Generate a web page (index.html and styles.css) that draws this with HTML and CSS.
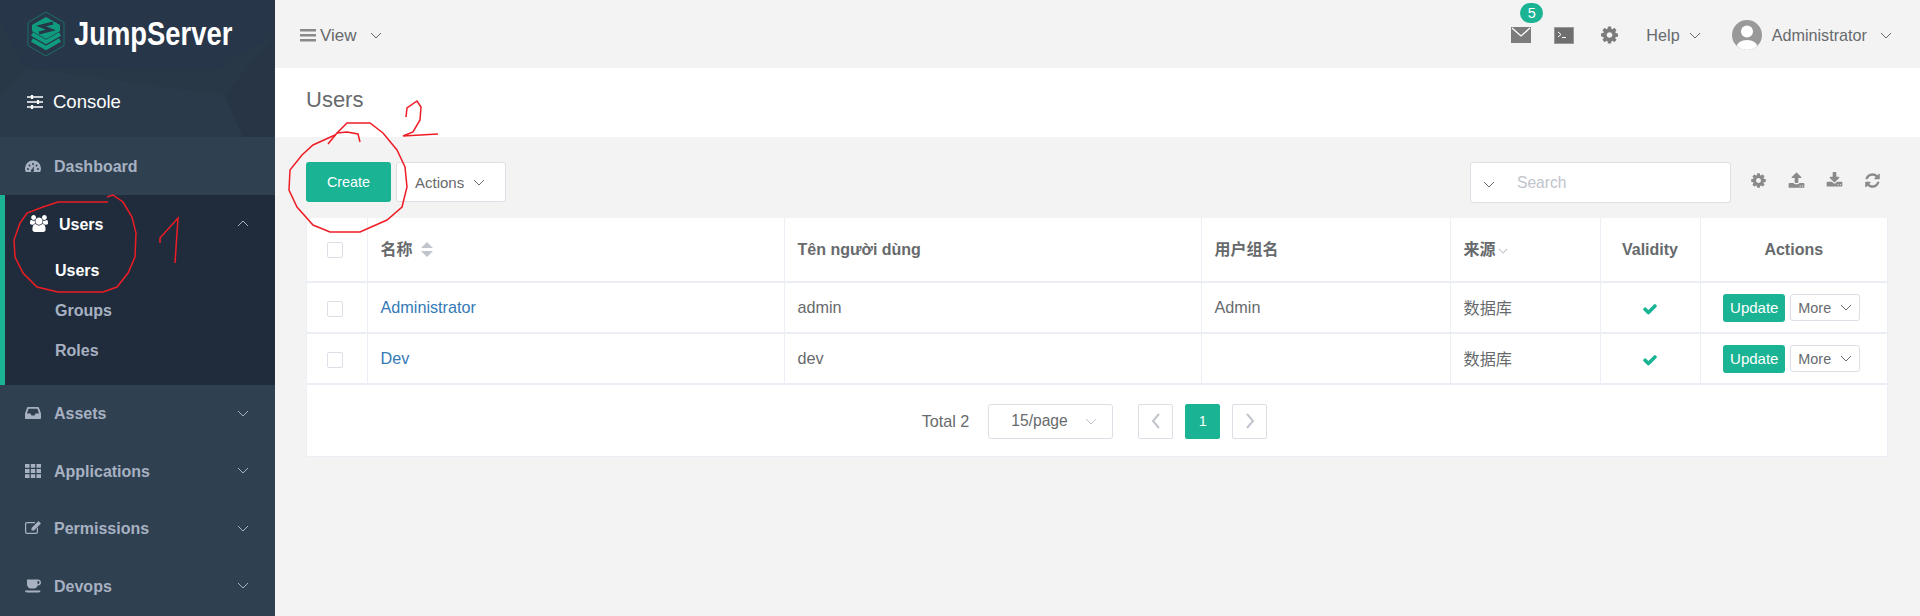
FILE: index.html
```html
<!DOCTYPE html>
<html>
<head>
<meta name="viewport" content="width=device-width, initial-scale=1">
<title>Users</title>
<link rel="stylesheet" href="styles.css">
</head>
<body>

<div class="app">
  <!-- left menu -->
  <aside class="sidebar">
    <div class="side-head">
      <svg class="side-bg" width="275" height="137" viewBox="0 0 275 137">
        <polygon points="0,0 275,0 275,35 215,70 25,68 0,20" fill="#28364a"/>
        <polygon points="0,98 25,68 225,95 243,137 0,137" fill="#2b3a4a"/>
        <polygon points="225,95 275,35 275,137 243,137" fill="#273545"/>
      </svg>
      <div class="logo">
        <svg width="38" height="46" viewBox="0 0 38 46">
          <polygon points="19,1 37,11.500 37,34.500 19,45 1,34.500 1,11.500" fill="none" stroke="#1a6f68" stroke-width="1"/>
          <polygon points="19,6 33,14 33,20 19,28 5,20 5,14" fill="#0f9b7d"/>
          <path d="M26 12 L14 15 L24 19 L12 22" fill="none" stroke="#26374a" stroke-width="3"/>
          <path d="M5 23 L19 31 L33 23" fill="none" stroke="#0f9b7d" stroke-width="4"/>
          <path d="M5 29 L19 37 L33 29" fill="none" stroke="#0f9b7d" stroke-width="4"/>
        </svg>
        <span class="logo-text">JumpServer</span>
      </div>
      <div class="console">
        <svg width="16" height="16" viewBox="0 0 16 16" fill="none" stroke="#fff" stroke-width="1.300">
          <path d="M0 3h16M0 8h16M0 13h16"/>
          <path d="M5 1v4M11 6v4M5 11v4" stroke-width="2.200"/>
        </svg>
        <span>Console</span>
      </div>
    </div>

    <div class="menu-item">
      <svg class="menu-icon" viewBox="0 0 16 16"><path fill-rule="evenodd" d="M8 2.500a8 8 0 0 1 8 8c0 1.300-.3 2.500-.8 3.500H.8A8 8 0 0 1 0 10.500a8 8 0 0 1 8-8zM3 10a1 1 0 1 0 0 2 1 1 0 0 0 0-2zm1.500-3.500a1 1 0 1 0 0 2 1 1 0 0 0 0-2zM8 5a1 1 0 1 0 0 2 1 1 0 0 0 0-2zm3.500 1.500a1 1 0 1 0 0 2 1 1 0 0 0 0-2zM13 10a1 1 0 1 0 0 2 1 1 0 0 0 0-2zM8.800 8 7 11.200a1.500 1.500 0 1 0 1.700.8z"/></svg>
      <span>Dashboard</span>
    </div>

    <div class="menu-group">
      <div class="menu-item active">
        <svg class="menu-icon users-icon" viewBox="0 0 1920 1792"><path d="M593 896q-162 5-265 128h-134q-82 0-138-40.500t-56-118.500q0-353 124-353 6 0 43.500 21t97.500 42.500 119 21.500q67 0 133-23-5 37-5 66 0 139 81 256zm1071 637q0 120-73 189.500t-194 69.500h-874q-121 0-194-69.500t-73-189.500q0-53 3.500-103.500t14-109 26.500-108.500 43-97.500 62-81 85.500-53.500 111.500-20q10 0 43 21.500t73 48 107 48 135 21.500 135-21.500 107-48 73-48 43-21.500q61 0 111.500 20t85.500 53.500 62 81 43 97.500 26.500 108.500 14 109 3.500 103.500zm-1024-1277q0 106-75 181t-181 75-181-75-75-181 75-181 181-75 181 75 75 181zm704 384q0 159-112.500 271.500t-271.500 112.500-271.500-112.500-112.500-271.500 112.500-271.500 271.500-112.500 271.500 112.500 112.500 271.500zm576 225q0 78-56 118.500t-138 40.500h-134q-103-123-265-128 81-117 81-256 0-29-5-66 66 23 133 23 59 0 119-21.500t97.500-42.500 43.500-21q124 0 124 353zm-128-609q0 106-75 181t-181 75-181-75-75-181 75-181 181-75 181 75 75 181z"/></svg>
        <span>Users</span>
        <svg class="chev up" viewBox="0 0 12 7"><path d="M1 6l5-5 5 5"/></svg>
      </div>
      <a class="sub-item current">Users</a>
      <a class="sub-item">Groups</a>
      <a class="sub-item">Roles</a>
    </div>

    <div class="menu-item">
      <svg class="menu-icon" viewBox="0 0 16 16"><path fill-rule="evenodd" d="M3 2h10c.4 0 .7.2.9.6L16 8.500V13c0 .6-.4 1-1 1H1c-.6 0-1-.4-1-1V8.500l2.100-5.900C2.300 2.200 2.600 2 3 2zm.6 1.800L2 8.500h3.500l1 2h3l1-2H14l-1.600-4.700z"/></svg>
      <span>Assets</span>
      <svg class="chev" viewBox="0 0 12 7"><path d="M1 1l5 5 5-5"/></svg>
    </div>
    <div class="menu-item">
      <svg class="menu-icon" viewBox="0 0 16 14"><path d="M0 0h4.500v3.800H0zM5.800 0h4.400v3.800H5.800zM11.500 0H16v3.800h-4.500zM0 5.100h4.500v3.800H0zM5.800 5.100h4.400v3.800H5.800zM11.500 5.100H16v3.800h-4.500zM0 10.200h4.500V14H0zM5.800 10.200h4.400V14H5.800zM11.500 10.200H16V14h-4.500z"/></svg>
      <span>Applications</span>
      <svg class="chev" viewBox="0 0 12 7"><path d="M1 1l5 5 5-5"/></svg>
    </div>
    <div class="menu-item">
      <svg class="menu-icon" viewBox="0 0 16 14"><path d="M2 1h8v1.200H2c-.5 0-.8.300-.8.800v8c0 .5.300.8.800.8h9c.5 0 .8-.3.800-.8V7.500L13 6.300V11c0 1.200-.9 2-2 2H2c-1.100 0-2-.8-2-2V3c0-1.200.9-2 2-2z"/><path d="M13.500 0 16 2.500 9 9.500H6.500V7z"/></svg>
      <span>Permissions</span>
      <svg class="chev" viewBox="0 0 12 7"><path d="M1 1l5 5 5-5"/></svg>
    </div>
    <div class="menu-item">
      <svg class="menu-icon" viewBox="0 0 16 15"><path fill-rule="evenodd" d="M2 1h11c1.700 0 3 1.100 3 3s-1.300 3-3 3h-.5c-.4 1.700-1.700 3-3.500 3H6c-2.200 0-4-1.800-4-4zm10.500 1.500V5.500H13c.9 0 1.500-.6 1.500-1.500s-.6-1.500-1.500-1.500z"/><path d="M0 12h15.500c0 1.200-.8 2-2 2H2c-1.200 0-2-.8-2-2z"/></svg>
      <span>Devops</span>
      <svg class="chev" viewBox="0 0 12 7"><path d="M1 1l5 5 5-5"/></svg>
    </div>
  </aside>

  <main class="main">
    <header class="topbar">
      <div class="view-menu">
        <svg width="16" height="13" viewBox="0 0 16 13" fill="#8a8a8a"><path d="M0 0h16v2.600H0zM0 5h16v2.600H0zM0 10h16v2.600H0z"/></svg>
        <span>View</span>
        <svg class="chev dark" viewBox="0 0 12 7"><path d="M1 1l5 5 5-5"/></svg>
      </div>
      <div class="top-right">
        <div class="mail">
          <svg width="20" height="16" viewBox="0 0 20 16"><rect width="20" height="16" fill="#7c7c7c"/><path d="M1 1l9 8 9-8" fill="none" stroke="#fff" stroke-width="1.300"/></svg>
          <span class="badge">5</span>
        </div>
        <svg class="term" width="20" height="17" viewBox="0 0 20 17"><rect x=".5" y=".5" width="19" height="16" fill="#6f6f6f" stroke="#999"/><path d="M4 5l3 2.500L4 10M8 10.500h4" fill="none" stroke="#fff" stroke-width="1"/></svg>
        <svg class="gear top-gear" viewBox="0 0 1536 1792"><path d="M1024 896q0-106-75-181t-181-75-181 75-75 181 75 181 181 75 181-75 75-181zm512-109v222q0 12-8 23t-20 13l-185 28q-19 54-39 91 35 50 107 138 10 12 10 25t-9 23q-27 37-99 108t-94 71q-12 0-26-9l-138-108q-44 23-91 38-16 136-29 186-7 28-36 28h-222q-14 0-24.500-8.500t-11.500-21.500l-28-184q-49-16-90-37l-141 107q-10 9-25 9-14 0-25-11-126-114-165-168-7-10-7-23 0-12 8-23 15-21 51-66.500t54-70.500q-27-50-41-99l-183-27q-13-2-21-12.500t-8-23.500v-222q0-12 8-23t19-13l186-28q14-46 39-92-40-57-107-138-10-12-10-24 0-10 9-23 26-36 98.500-107.500t94.500-71.500q13 0 26 10l138 107q44-23 91-38 16-136 29-186 7-28 36-28h222q14 0 24.500 8.500t11.500 21.500l28 184q49 16 90 37l142-107q9-9 24-9 13 0 25 10 129 119 165 170 7 8 7 22 0 12-8 23-15 21-51 66.500t-54 70.500q26 50 41 98l183 28q13 2 21 12.500t8 23.500z"/></svg>
        <div class="help">
          <span>Help</span>
          <svg class="chev dark" viewBox="0 0 12 7"><path d="M1 1l5 5 5-5"/></svg>
        </div>
        <div class="user-menu">
          <svg width="30" height="30" viewBox="0 0 30 30"><defs><clipPath id="av"><circle cx="15" cy="15" r="15"/></clipPath></defs><g clip-path="url(#av)"><rect width="30" height="30" fill="#999"/><circle cx="15" cy="11.500" r="6" fill="#fff"/><ellipse cx="15" cy="27" rx="10.500" ry="7" fill="#fff"/></g></svg>
          <span>Administrator</span>
          <svg class="chev dark" viewBox="0 0 12 7"><path d="M1 1l5 5 5-5"/></svg>
        </div>
      </div>
    </header>

    <div class="page-title">Users</div>

    <section class="content">
      <div class="toolbar">
        <button class="btn-create">Create</button>
        <button class="btn-actions">Actions
          <svg class="chev dark" viewBox="0 0 12 7"><path d="M1 1l5 5 5-5"/></svg>
        </button>
        <div class="spacer"></div>
        <div class="search">
          <svg class="chev dark" viewBox="0 0 12 7"><path d="M1 1l5 5 5-5"/></svg>
          <span>Search</span>
        </div>
        <div class="tools">
          <svg class="tool" viewBox="0 0 1536 1792"><path d="M1024 896q0-106-75-181t-181-75-181 75-75 181 75 181 181 75 181-75 75-181zm512-109v222q0 12-8 23t-20 13l-185 28q-19 54-39 91 35 50 107 138 10 12 10 25t-9 23q-27 37-99 108t-94 71q-12 0-26-9l-138-108q-44 23-91 38-16 136-29 186-7 28-36 28h-222q-14 0-24.500-8.500t-11.500-21.500l-28-184q-49-16-90-37l-141 107q-10 9-25 9-14 0-25-11-126-114-165-168-7-10-7-23 0-12 8-23 15-21 51-66.500t54-70.500q-27-50-41-99l-183-27q-13-2-21-12.500t-8-23.500v-222q0-12 8-23t19-13l186-28q14-46 39-92-40-57-107-138-10-12-10-24 0-10 9-23 26-36 98.500-107.500t94.500-71.500q13 0 26 10l138 107q44-23 91-38 16-136 29-186 7-28 36-28h222q14 0 24.500 8.500t11.500 21.500l28 184q49 16 90 37l142-107q9-9 24-9 13 0 25 10 129 119 165 170 7 8 7 22 0 12-8 23-15 21-51 66.500t-54 70.500q26 50 41 98l183 28q13 2 21 12.500t8 23.500z"/></svg>
          <svg class="tool" viewBox="0 0 1792 1792"><path d="M1344 1472q0-26-19-45t-45-19-45 19-19 45 19 45 45 19 45-19 19-45zm256 0q0-26-19-45t-45-19-45 19-19 45 19 45 45 19 45-19 19-45zm128-224v320q0 40-28 68t-68 28h-1472q-40 0-68-28t-28-68v-320q0-40 28-68t68-28h427q21 56 70.500 92t110.500 36h256q61 0 110.500-36t70.500-92h427q40 0 68 28t28 68zm-325-648q-17 40-59 40h-256v448q0 26-19 45t-45 19h-256q-26 0-45-19t-19-45v-448h-256q-42 0-59-40-17-39 14-69l448-448q18-19 45-19t45 19l448 448q31 30 14 69z"/></svg>
          <svg class="tool" viewBox="0 0 1792 1792"><path d="M1344 1344q0-26-19-45t-45-19-45 19-19 45 19 45 45 19 45-19 19-45zm256 0q0-26-19-45t-45-19-45 19-19 45 19 45 45 19 45-19 19-45zm128-224v320q0 40-28 68t-68 28h-1472q-40 0-68-28t-28-68v-320q0-40 28-68t68-28h465l135 136q58 56 136 56t136-56l136-136h464q40 0 68 28t28 68zm-325-569q17 41-14 70l-448 448q-18 19-45 19t-45-19l-448-448q-31-29-14-70 17-39 59-39h256v-448q0-26 19-45t45-19h256q26 0 45 19t19 45v448h256q42 0 59 39z"/></svg>
          <svg class="tool" viewBox="0 0 1792 1792"><path d="M1639 1056q0 5-1 7-64 268-268 434.500t-478 166.500q-146 0-282.500-55t-243.500-157l-129 129q-19 19-45 19t-45-19-19-45v-448q0-26 19-45t45-19h448q26 0 45 19t19 45-19 45l-137 137q71 66 161 102t187 36q134 0 250-65t186-179q11-17 53-117 8-23 30-23h192q13 0 22.500 9.500t9.500 22.500zm25-800v448q0 26-19 45t-45 19h-448q-26 0-45-19t-19-45 19-45l138-138q-148-137-349-137-134 0-250 65t-186 179q-11 17-53 117-8 23-30 23h-199q-13 0-22.500-9.500t-9.500-22.500v-7q65-268 270-434.500t480-166.500q146 0 284 55.500t245 156.500l130-129q19-19 45-19t45 19 19 45z"/></svg>
        </div>
      </div>

      <div class="panel">
        <table class="users-table">
          <colgroup>
            <col class="c-check"><col class="c-name"><col class="c-user"><col class="c-group"><col class="c-source"><col class="c-valid"><col class="c-actions">
          </colgroup>
          <thead>
            <tr>
              <th class="center pick"><span class="checkbox"></span></th>
              <th class="cjk">名称
                <svg class="sort" width="12" height="15" viewBox="0 0 12 15" fill="#c0c4cc"><path d="M6 0l6 6H0zM6 15l6-6H0z"/></svg>
              </th>
              <th>Tên người dùng</th>
              <th class="cjk">用户组名</th>
              <th class="cjk">来源<svg class="chev light" viewBox="0 0 12 7"><path d="M1 1l5 5 5-5"/></svg></th>
              <th class="center">Validity</th>
              <th class="center">Actions</th>
            </tr>
          </thead>
          <tbody>
            <tr>
              <td class="center pick"><span class="checkbox"></span></td>
              <td><a class="link">Administrator</a></td>
              <td>admin</td>
              <td>Admin</td>
              <td class="cjk">数据库</td>
              <td class="center"><svg class="check" viewBox="0 0 1792 1792"><path d="M1671 566q0 40-28 68l-724 724-136 136q-28 28-68 28t-68-28l-136-136-362-362q-28-28-28-68t28-68l136-136q28-28 68-28t68 28l294 295 656-657q28-28 68-28t68 28l136 136q28 28 28 68z"/></svg></td>
              <td class="center row-btns"><button class="btn-update">Update</button><button class="btn-more">More<svg class="chev dark" viewBox="0 0 12 7"><path d="M1 1l5 5 5-5"/></svg></button></td>
            </tr>
            <tr>
              <td class="center pick"><span class="checkbox"></span></td>
              <td><a class="link">Dev</a></td>
              <td>dev</td>
              <td></td>
              <td class="cjk">数据库</td>
              <td class="center"><svg class="check" viewBox="0 0 1792 1792"><path d="M1671 566q0 40-28 68l-724 724-136 136q-28 28-68 28t-68-28l-136-136-362-362q-28-28-28-68t28-68l136-136q28-28 68-28t68 28l294 295 656-657q28-28 68-28t68 28l136 136q28 28 28 68z"/></svg></td>
              <td class="center row-btns"><button class="btn-update">Update</button><button class="btn-more">More<svg class="chev dark" viewBox="0 0 12 7"><path d="M1 1l5 5 5-5"/></svg></button></td>
            </tr>
          </tbody>
        </table>
        <div class="pager">
          <span class="total">Total 2</span>
          <div class="page-size">
            <span>15/page</span>
            <svg class="chev light" viewBox="0 0 12 7"><path d="M1 1l5 5 5-5"/></svg>
          </div>
          <span class="page-btn"><svg width="10" height="16" viewBox="0 0 10 16"><path d="M8 1L2 8l6 7"/></svg></span>
          <span class="page-btn on">1</span>
          <span class="page-btn"><svg width="10" height="16" viewBox="0 0 10 16"><path d="M2 1l6 7-6 7"/></svg></span>
        </div>
      </div>
    </section>
  </main>
</div>

<!-- red marks drawn on top of the screenshot -->
<svg class="marks" width="1920" height="616" viewBox="0 0 1920 616">
  <polyline points="107,197 113,195 123,202 132,217 136,233 135,257 128,273 117,287 103,292 58,292 37,287 23,273 15,257 14,240 20,223 27,213 43,207 58,202 108,202"/>
  <polyline points="160,243 160,238 178,218 175,263"/>
  <polyline points="328,144 337,133 347,132 358,134 360,142"/>
  <polyline points="337,133 347,123 370,123 383,133 397,150 405,167 407,187 402,207 387,220 360,232 330,232 313,225 297,207 289,190 290,170 302,155 313,145 335,135"/>
  <polyline points="406,117 407,108 417,101 421,107 420,120 413,132 403,136 438,134"/>
</svg>

</body>
</html>
```

FILE: styles.css
```css
* {
  box-sizing: border-box;
}

html, body {
  margin: 0;
  height: 100%;
}

body {
  font-family: "Liberation Sans", Arial, "Noto Sans CJK SC", sans-serif;
  font-size: 16.200px;
  color: #676a6c;
  background: #f3f3f4;
  overflow: hidden;
}

.app {
  display: flex;
  height: 616px;
}

/* Sidebar */
.sidebar {
  width: 275px;
  flex: none;
  background: #2f4050;
  overflow: hidden;
}

.side-head {
  position: relative;
  height: 137px;
  background: #293846;
}

.side-bg {
  position: absolute;
  left: 0;
  top: 0;
}

.logo {
  position: relative;
  display: flex;
  align-items: center;
  gap: 9px;
  height: 68px;
  padding: 0 0 0 27px;
}

.logo-text {
  font-family: "Liberation Sans", sans-serif;
  font-weight: bold;
  font-size: 33px;
  color: #fff;
  transform: scaleX(.83);
  transform-origin: left center;
}

.console {
  position: relative;
  display: flex;
  align-items: center;
  gap: 10px;
  padding: 2px 0 0 27px;
  height: 66px;
  color: #fff;
  font-size: 18.500px;
}

.menu-item {
  display: flex;
  align-items: center;
  height: 57.500px;
  padding: 0 26px 0 25px;
  color: #a7b1c2;
  font-weight: bold;
  font-size: 16px;
}

.menu-item span {
  flex: 1;
  margin-left: 13px;
  padding-top: 2px;
}

.menu-icon {
  width: 16px;
  height: 16px;
  fill: #a7b1c2;
  flex: none;
}

.menu-group {
  height: 190px;
  background: #202c3b;
  border-left: 5px solid #1ab394;
}

.menu-group .menu-item {
  color: #fff;
  padding-left: 25px;
}

.menu-group .menu-item span {
  margin-left: 11px;
  padding-top: 4px;
}

.users-icon {
  fill: #fff;
  width: 18px;
  height: 17px;
}

.sub-item {
  display: block;
  height: 40px;
  line-height: 40px;
  padding-left: 50px;
  color: #a7b1c2;
  font-weight: bold;
  font-size: 16px;
}

.sub-item.current {
  color: #fff;
  margin-top: -1px;
}

.chev {
  width: 12px;
  height: 7px;
  flex: none;
  fill: none;
  stroke: #a7b1c2;
  stroke-width: 1;
}

.chev.dark {
  stroke: #676a6c;
}

.chev.light {
  stroke: #c0c4cc;
}

/* Top bar */
.main {
  flex: 1;
  min-width: 0;
}

.topbar {
  display: flex;
  align-items: center;
  justify-content: space-between;
  height: 68px;
  padding: 2px 28px 0 25px;
}

.view-menu {
  display: flex;
  align-items: center;
  font-size: 17px;
}

.view-menu span {
  margin: 2px 13px 0 4px;
}

.top-right {
  display: flex;
  align-items: center;
}

.mail {
  position: relative;
  height: 16px;
}

.mail svg {
  display: block;
}

.badge {
  position: absolute;
  left: 9px;
  top: -24px;
  width: 23px;
  height: 20px;
  line-height: 20px;
  border-radius: 10px;
  background: #1ab394;
  color: #fff;
  text-align: center;
  font-size: 14.400px;
}

.term {
  margin-left: 23px;
}

.top-gear {
  width: 17px;
  height: 20px;
  fill: #7c7c7c;
  margin-left: 27px;
}

.help {
  display: flex;
  align-items: center;
  gap: 9px;
  margin-left: 28px;
}

.user-menu {
  display: flex;
  align-items: center;
  margin-left: 31px;
}

.user-menu span {
  margin: 0 13px 0 10px;
}

.page-title {
  height: 69px;
  padding: 19px 0 0 31px;
  background: #fff;
  font-size: 22px;
}

/* Content */
.content {
  padding: 25px 32px 0 31px;
}

.toolbar {
  display: flex;
  align-items: flex-start;
  height: 41px;
  margin-bottom: 15px;
}

.spacer {
  flex: 1;
}

button {
  font-family: inherit;
}

.btn-create {
  width: 85px;
  height: 40px;
  margin-right: 5px;
  border: none;
  border-radius: 3px;
  background: #1ab394;
  color: #fff;
  font-size: 14.400px;
}

.btn-actions {
  display: flex;
  align-items: center;
  gap: 9px;
  width: 110px;
  height: 40px;
  padding: 0 0 0 18px;
  border: 1px solid #dcdfe6;
  border-radius: 3px;
  background: #fff;
  color: #676a6c;
  font-size: 15px;
}

.search {
  display: flex;
  align-items: center;
  width: 261px;
  height: 41px;
  padding-left: 12px;
  background: #fff;
  border: 1px solid #dcdfe6;
  border-radius: 3px;
  color: #c0c4cc;
  font-size: 15.600px;
}

.search span {
  margin-left: 22px;
}

.search .chev {
  margin-top: 4px;
}

.tools {
  display: flex;
  gap: 21px;
  margin: 10px 7px 0 19px;
}

.tool {
  width: 17px;
  height: 17px;
  fill: #8a8a8a;
  display: block;
}

.panel {
  background: #fff;
  border: 1px solid #ebeef5;
  border-top: none;
  height: 239px;
}

.users-table {
  width: 100%;
  border-collapse: collapse;
  table-layout: fixed;
}

.c-check { width: 60px; }
.c-name { width: 417px; }
.c-user { width: 417px; }
.c-group { width: 249px; }
.c-source { width: 150px; }
.c-valid { width: 100px; }

.users-table th, .users-table td {
  border: 2px solid #ebeef5;
  border-left-width: 1px;
  border-right-width: 1px;
  padding: 0 13px;
  text-align: left;
}

.users-table th:first-child, .users-table td:first-child {
  border-left: none;
}

.users-table th:last-child, .users-table td:last-child {
  border-right: none;
}

.users-table thead th {
  height: 64px;
  border-top: none;
  font-size: 16px;
}

.users-table tbody td {
  height: 51px;
}

/* the CJK face sits lower than Liberation on the line */
.users-table th.cjk {
  padding-bottom: 4px;
}

.users-table td.cjk {
  padding-bottom: 2px;
}

.users-table .center {
  text-align: center;
}

.users-table .pick {
  padding: 0 14px 0 10px;
}

.users-table .row-btns {
  padding: 0 4px 0 0;
}

.checkbox {
  display: inline-block;
  width: 16px;
  height: 16px;
  vertical-align: middle;
  border: 1px solid #dcdfe6;
  border-radius: 2px;
  background: #fff;
}

.sort {
  margin-left: 4px;
  vertical-align: -2px;
}

th .chev.light {
  width: 10px;
  height: 6px;
  margin-left: 2px;
  vertical-align: 1px;
  stroke-width: 1.300;
}

.link {
  color: #337ab7;
}

.check {
  width: 16px;
  height: 16px;
  fill: #1ab394;
  vertical-align: middle;
  margin-right: 1px;
}

.btn-update {
  width: 62px;
  height: 28px;
  border: none;
  border-radius: 3px;
  background: #1ab394;
  color: #fff;
  font-size: 15px;
  padding: 0;
  vertical-align: middle;
}

.btn-more {
  display: inline-flex;
  align-items: center;
  justify-content: center;
  gap: 9px;
  width: 70px;
  height: 27px;
  margin-left: 5px;
  padding: 0;
  border: 1px solid #dcdfe6;
  border-radius: 3px;
  background: #fff;
  color: #676a6c;
  font-size: 14.400px;
  vertical-align: middle;
}

/* Pagination */
.pager {
  display: flex;
  align-items: center;
  justify-content: center;
  height: 72px;
  padding-left: 7px;
}

.page-size {
  display: flex;
  align-items: center;
  justify-content: space-between;
  width: 125px;
  height: 35px;
  margin: 0 25px 0 19px;
  padding: 0 15px 0 22px;
  border: 1px solid #dcdfe6;
  border-radius: 3px;
  font-size: 15.600px;
}

.page-btn {
  display: flex;
  align-items: center;
  justify-content: center;
  width: 35px;
  height: 35px;
  margin-right: 12px;
  border: 1px solid #dcdfe6;
  border-radius: 2px;
  color: #fff;
  font-size: 14.400px;
}

.page-btn svg {
  fill: none;
  stroke: #c0c4cc;
  stroke-width: 2;
}

.page-btn.on {
  background: #1ab394;
  border-color: #1ab394;
}

/* Hand drawn marks */
.marks {
  position: absolute;
  left: 0;
  top: 0;
  pointer-events: none;
}

.marks polyline {
  fill: none;
  stroke: #ee1c25;
  stroke-width: 1.500;
}
```
